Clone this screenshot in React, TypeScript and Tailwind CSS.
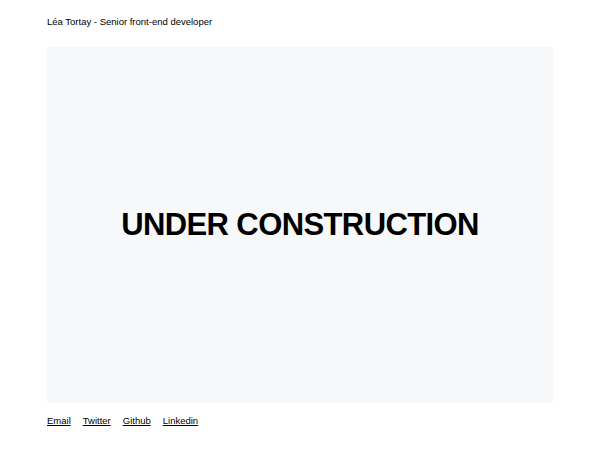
export default function App() {
  return (
    <div className="flex h-[450px] w-[600px] flex-col bg-white px-[47px] font-['Liberation_Sans',Arial,sans-serif] text-black">
      <header className="flex h-[47px] items-center pb-[3px] text-[9.5px]">
        Léa Tortay - Senior front-end developer
      </header>
      <main className="flex h-[356px] items-center justify-center bg-[#f7f8fa]">
        <h1 className="text-[31px] font-bold tracking-[-0.6px]">UNDER CONSTRUCTION</h1>
      </main>
      <footer className="flex gap-3 pt-[11px] text-[9.5px]">
        <a href="#" className="underline">Email</a>
        <a href="#" className="underline">Twitter</a>
        <a href="#" className="underline">Github</a>
        <a href="#" className="underline">Linkedin</a>
      </footer>
    </div>
  );
}
